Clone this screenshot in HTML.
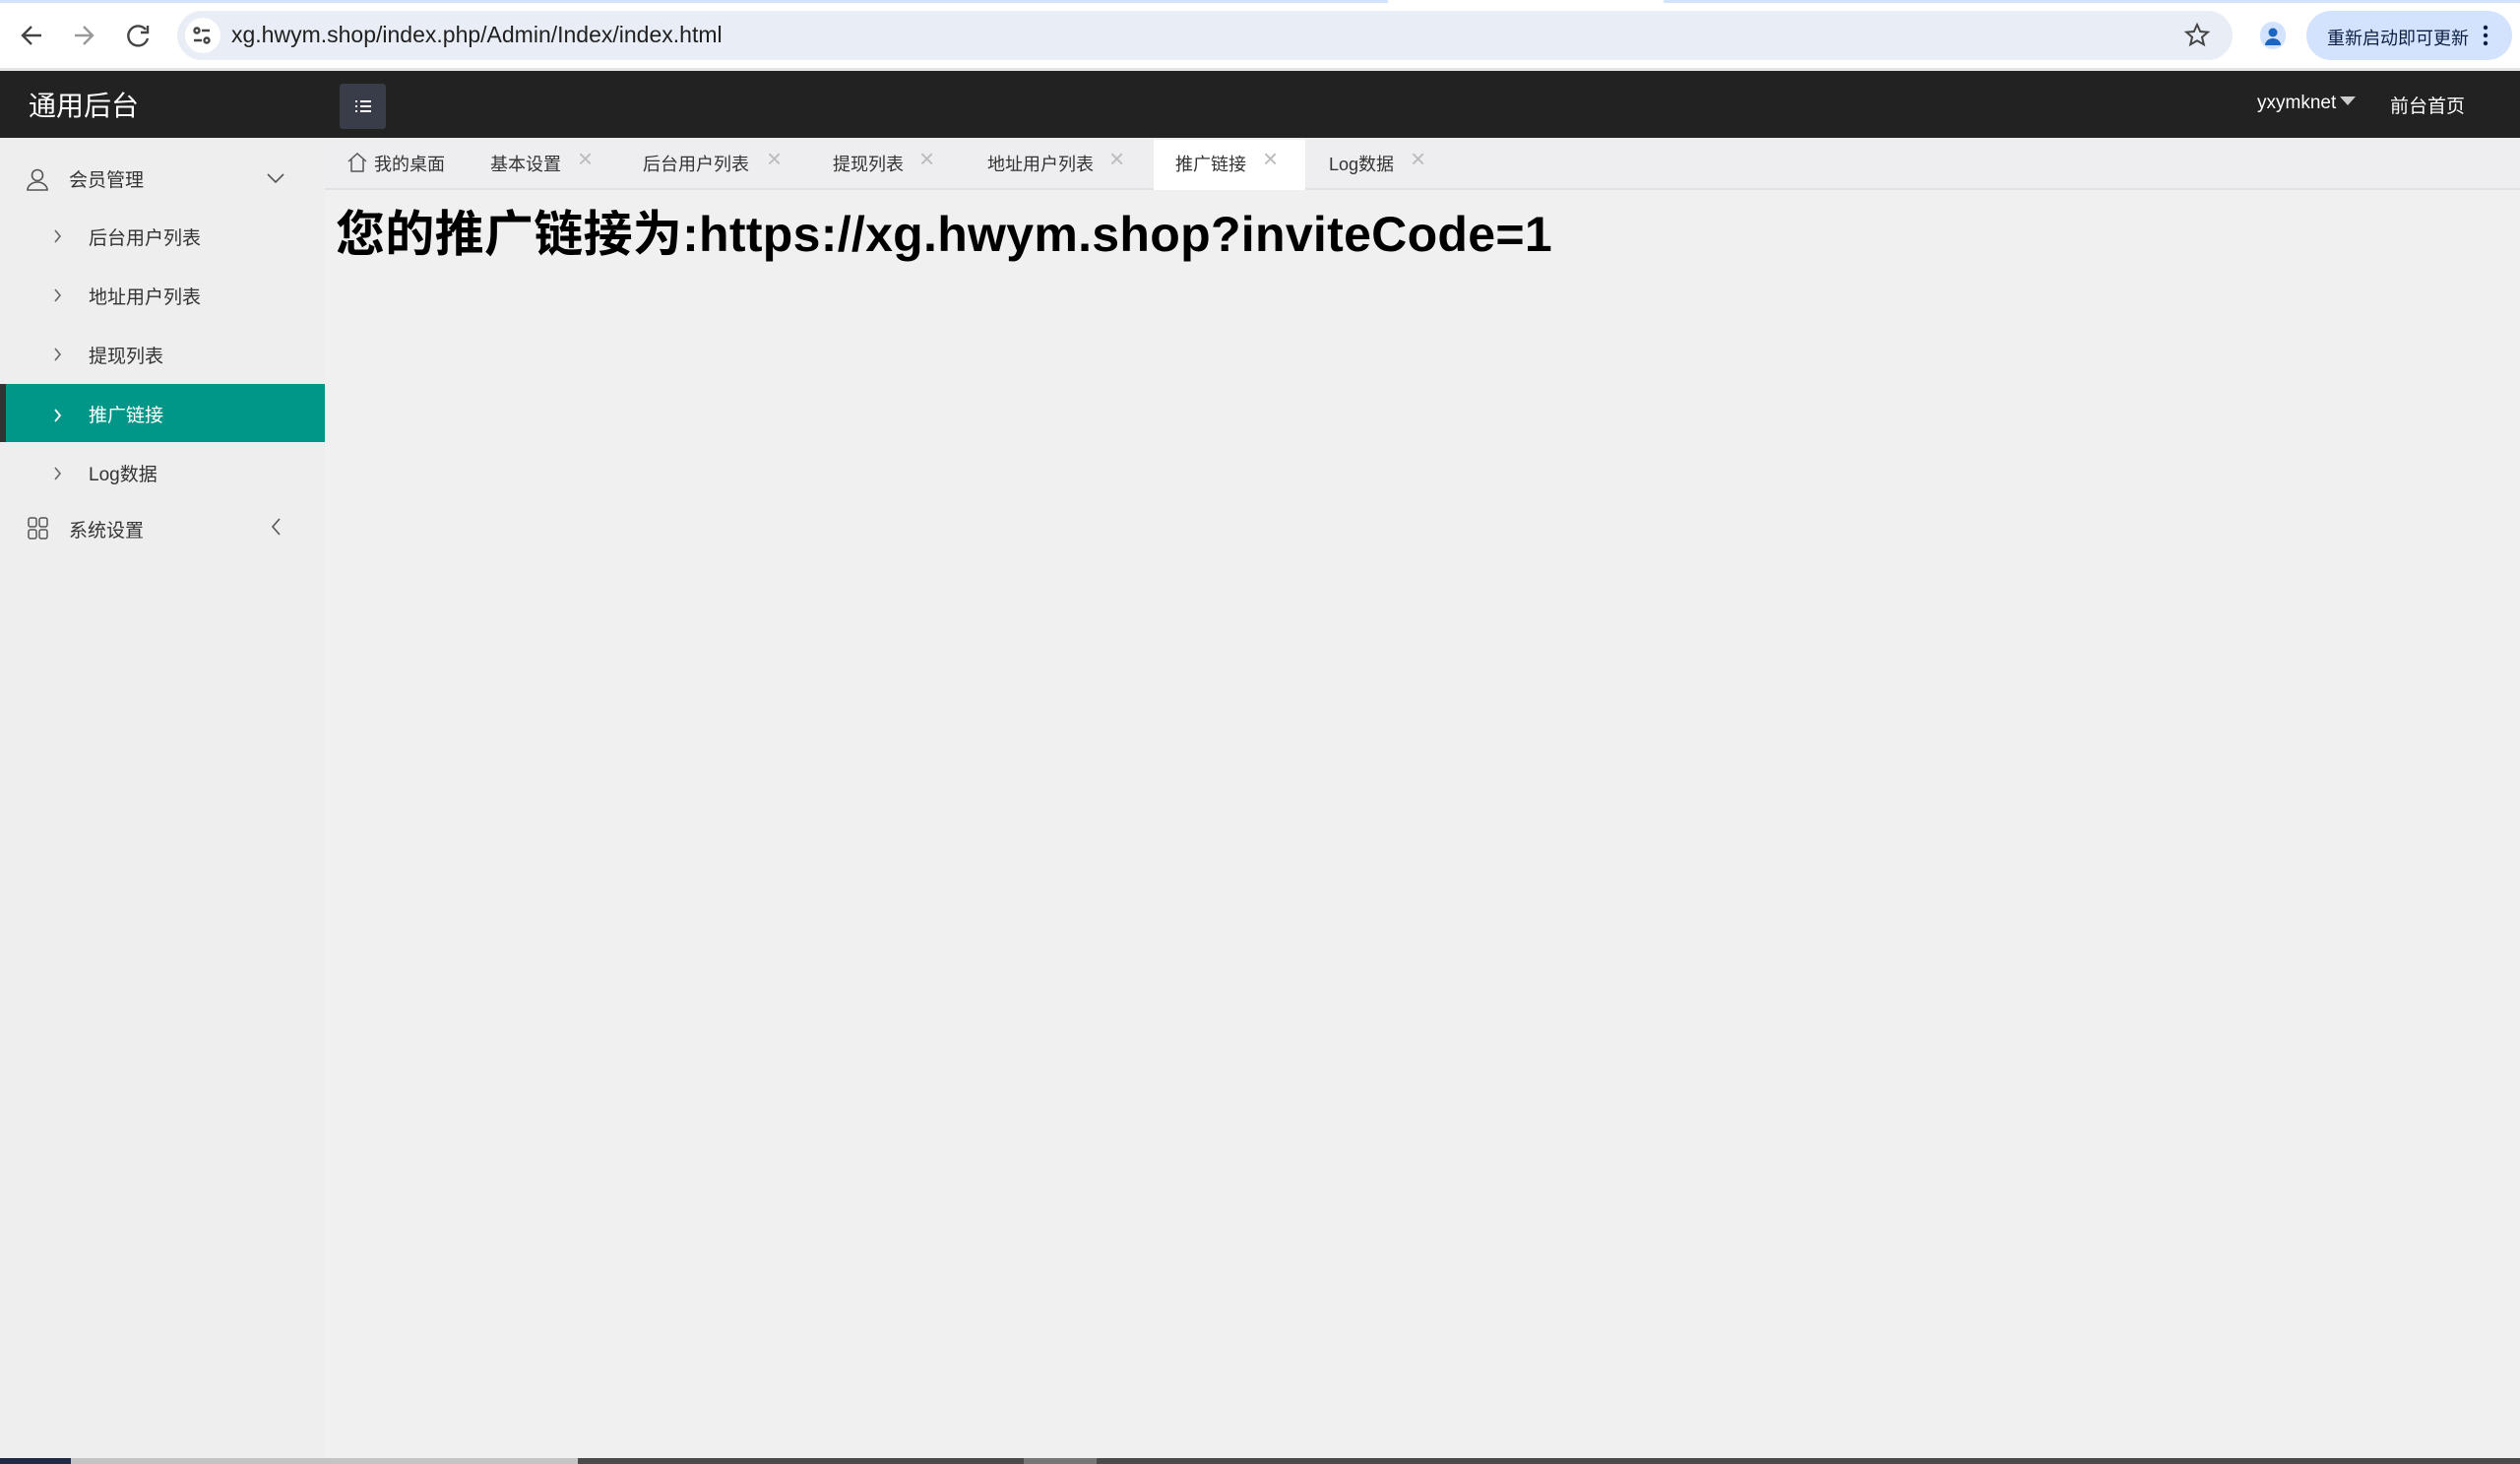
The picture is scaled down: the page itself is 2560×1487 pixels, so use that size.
<!DOCTYPE html>
<html><head><meta charset="utf-8"><style>
*{margin:0;padding:0;box-sizing:border-box}
body{width:2560px;height:1487px;overflow:hidden;background:#f0f0f0;font-family:"Liberation Sans","Noto Sans CJK SC",sans-serif;position:relative}
.a{position:absolute;white-space:nowrap}
.side{font-size:19px;color:#333}
.tab{font-size:18px;color:#333;top:153px}
.x{font-size:26px;color:#bbb;top:146px;font-weight:300}
</style></head><body>
<!-- browser chrome -->
<div class="a" style="left:0;top:0;width:2560px;height:72px;background:#fff"></div>
<div class="a" style="left:0;top:0;width:1410px;height:3px;background:#d3e3fd"></div>
<div class="a" style="left:1690px;top:0;width:870px;height:3px;background:#d3e3fd"></div>
<div class="a" style="left:180px;top:11px;width:2088px;height:50px;border-radius:25px;background:#e9eef6"></div>
<div class="a" style="left:188px;top:18px;width:36px;height:36px;border-radius:18px;background:#fff"></div>
<svg class="a" style="left:0;top:0" width="240" height="72"><g stroke="#444" stroke-width="2.4" fill="none">
<path d="M42 36H24M32 27l-9 9 9 9"/><path d="M76 36h17M85 27l9 9-9 9" stroke="#999"/>
<path d="M148 30a10 10 0 1 0 2 9M150 26v7h-7"/>
<circle cx="200" cy="31" r="2.5"/><path d="M205 31h8M197 41h8"/><circle cx="210" cy="41" r="2.5"/></g></svg>
<div class="a" style="left:235px;top:22px;font-size:23px;color:#1f1f1f">xg.hwym.shop/index.php/Admin/Index/index.html</div>
<svg class="a" style="left:2218px;top:22px" width="28" height="28"><path d="M14 3l3.2 7 7.6.7-5.8 5 1.8 7.5L14 19.3 7.2 23.2 9 15.7 3.2 10.7l7.6-.7z" fill="none" stroke="#444" stroke-width="2"/></svg>
<div class="a" style="left:2296px;top:22px;width:26px;height:28px;border-radius:13px;background:#d3e3fd"></div>
<svg class="a" style="left:2296px;top:22px" width="26" height="28"><circle cx="13" cy="11" r="4.5" fill="#1a66c2"/><path d="M5 24a8 7 0 0 1 16 0z" fill="#1a66c2"/></svg>
<div class="a" style="left:2343px;top:11px;width:209px;height:50px;border-radius:25px;background:#d3e3fd"></div>
<div class="a" style="left:2364px;top:25px;font-size:18px;color:#0b1f44">重新启动即可更新</div>
<svg class="a" style="left:2520px;top:24px" width="10" height="24"><circle cx="5" cy="4" r="2.2" fill="#0b1f44"/><circle cx="5" cy="12" r="2.2" fill="#0b1f44"/><circle cx="5" cy="20" r="2.2" fill="#0b1f44"/></svg>
<div class="a" style="left:0;top:69px;width:2560px;height:3px;background:#e5e5e5"></div>
<!-- header -->
<div class="a" style="left:0;top:72px;width:2560px;height:68px;background:#222"></div>
<div class="a" style="left:29px;top:86px;font-size:28px;color:#fff">通用后台</div>
<div class="a" style="left:345px;top:85px;width:47px;height:46px;border-radius:3px;background:#393d49"></div>
<svg class="a" style="left:345px;top:85px" width="47" height="46"><g stroke="#fff" stroke-width="2"><path d="M16 18h2M21 18h11M16 23h2M21 23h11M16 28h2M21 28h11"/></g></svg>
<div class="a" style="left:2293px;top:94px;font-size:19px;color:#fff">yxymknet</div>
<svg class="a" style="left:2376px;top:97px" width="18" height="12"><path d="M1 1h16l-8 9z" fill="#ccc"/></svg>
<div class="a" style="left:2428px;top:93px;font-size:19px;color:#fff">前台首页</div>
<!-- sidebar -->
<div class="a" style="left:0;top:140px;width:330px;height:1341px;background:#eee"></div>
<svg class="a" style="left:26px;top:170px" width="24" height="24"><g fill="none" stroke="#555" stroke-width="1.6"><circle cx="12" cy="8" r="5.5"/><path d="M2 23a10 8 0 0 1 20 0z"/></g></svg>
<div class="a side" style="left:70px;top:168px">会员管理</div>
<svg class="a" style="left:270px;top:174px" width="20" height="14"><path d="M2 3l8 8 8-8" fill="none" stroke="#555" stroke-width="1.6"/></svg>
<svg class="a" style="left:54px;top:232px" width="10" height="200"><g fill="none" stroke="#666" stroke-width="1.6"><path d="M2 2l5 6-5 6M2 62l5 6-5 6M2 122l5 6-5 6"/></g></svg>
<div class="a side" style="left:90px;top:227px">后台用户列表</div>
<div class="a side" style="left:90px;top:287px">地址用户列表</div>
<div class="a side" style="left:90px;top:347px">提现列表</div>
<div class="a" style="left:0;top:390px;width:330px;height:59px;background:#009688"></div>
<div class="a" style="left:0;top:390px;width:6px;height:59px;background:#333"></div>
<svg class="a" style="left:54px;top:414px" width="10" height="16"><path d="M2 2l5 6-5 6" fill="none" stroke="#fff" stroke-width="1.8"/></svg>
<div class="a side" style="left:90px;top:407px;color:#fff">推广链接</div>
<svg class="a" style="left:54px;top:473px" width="10" height="16"><path d="M2 2l5 6-5 6" fill="none" stroke="#666" stroke-width="1.6"/></svg>
<div class="a side" style="left:90px;top:467px">Log数据</div>
<svg class="a" style="left:28px;top:525px" width="22" height="24"><g fill="none" stroke="#555" stroke-width="1.5"><rect x="1" y="1" width="8" height="9" rx="2"/><rect x="12" y="1" width="8" height="9" rx="2"/><rect x="1" y="13" width="8" height="9" rx="2"/><rect x="12" y="13" width="8" height="9" rx="2"/></g></svg>
<div class="a side" style="left:70px;top:524px">系统设置</div>
<svg class="a" style="left:274px;top:525px" width="12" height="20"><path d="M10 2l-7 8 7 8" fill="none" stroke="#555" stroke-width="1.6"/></svg>
<!-- tabs -->
<div class="a" style="left:330px;top:140px;width:2230px;height:53px;background:#eeeef0;border-bottom:2px solid #e2e2e2"></div>
<div class="a" style="left:1172px;top:142px;width:154px;height:51px;background:#fff"></div>
<svg class="a" style="left:352px;top:154px" width="22" height="22"><path d="M2 10L11 2l9 8M5 8v12h12V8" fill="none" stroke="#555" stroke-width="1.5"/></svg>
<div class="a tab" style="left:380px">我的桌面</div>
<div class="a tab" style="left:498px">基本设置</div><div class="a x" style="left:587px">×</div>
<div class="a tab" style="left:653px">后台用户列表</div><div class="a x" style="left:779px">×</div>
<div class="a tab" style="left:846px">提现列表</div><div class="a x" style="left:934px">×</div>
<div class="a tab" style="left:1003px">地址用户列表</div><div class="a x" style="left:1127px">×</div>
<div class="a tab" style="left:1194px">推广链接</div><div class="a x" style="left:1283px">×</div>
<div class="a tab" style="left:1350px">Log数据</div><div class="a x" style="left:1433px">×</div>
<!-- content -->
<div class="a" style="left:341px;top:198px;font-size:50px;font-weight:bold;color:#000;letter-spacing:0.3px">您的推广链接为:https://xg.hwym.shop?inviteCode=1</div>
<!-- bottom strip -->
<div class="a" style="left:0;top:1481px;width:2560px;height:6px;background:#4a4a4a"></div>
<div class="a" style="left:0;top:1481px;width:72px;height:6px;background:#1f2a44"></div>
<div class="a" style="left:72px;top:1481px;width:515px;height:6px;background:#c4c4c4"></div>
<div class="a" style="left:1040px;top:1481px;width:74px;height:6px;background:#777"></div>
</body></html>
